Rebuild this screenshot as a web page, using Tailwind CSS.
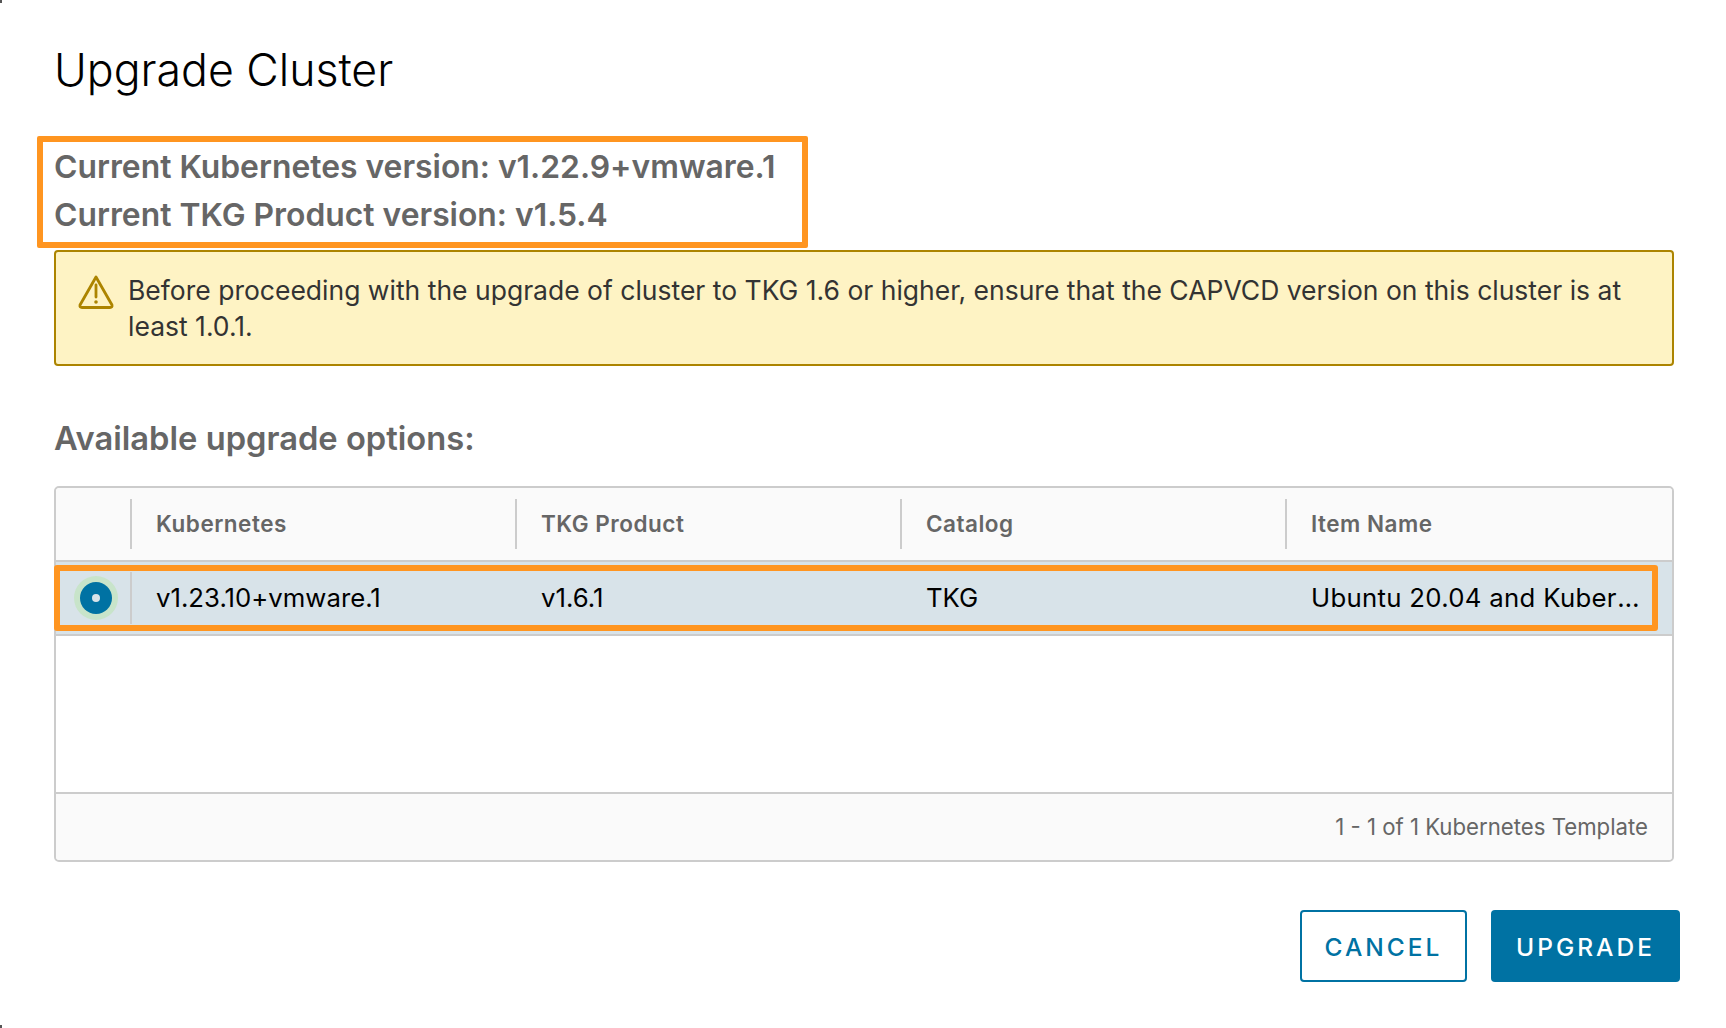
<!DOCTYPE html>
<html lang="en">
<head>
    <meta charset="UTF-8">
    <title>Upgrade Cluster</title>
    <script src="https://cdn.jsdelivr.net/npm/@tailwindcss/browser@4"></script>
</head>
<body class="relative bg-white font-['Inter',sans-serif] w-[1726px] h-[1028px] overflow-hidden">
    <!-- window corner remnants -->
    <span class="absolute top-0 left-0 w-[2px] h-[3px] bg-[#555]"></span>
    <span class="absolute bottom-0 left-0 w-[2px] h-[3px] bg-[#555]"></span>

    <div class="pl-[54px] pr-[52px] pt-[40px]">
        <h1 class="text-[44.6px] leading-[60px] font-light text-black">Upgrade Cluster</h1>

        <!-- current versions, orange annotation box -->
        <div class="mt-[36px] -ml-[17px] w-[771px] h-[112px] border-[6px] border-[#ff9520] rounded-[2px] pl-[11px] pt-[1px] text-[31.85px] leading-[48px] font-semibold text-[#666]">
            <p>Current Kubernetes version: v1.22.9+vmware.1</p>
            <p>Current TKG Product version: v1.5.4</p>
        </div>

        <!-- warning -->
        <div class="mt-[2px] h-[116px] border-2 border-[#ac8400] rounded-[4px] bg-[#fef3c4] flex pl-[22px] pr-[40px] pt-[20px]">
            <svg class="w-[36px] h-[36px] mt-[2px] shrink-0" viewBox="0 0 36 36" fill="none" stroke="#ac8400" stroke-width="2.8" stroke-linejoin="round">
                <path d="M18 3 L34 31 Q34.5 33.5 32 33.5 L4 33.5 Q1.5 33.5 2 31 Z"/>
                <path d="M18 11 V23" stroke-linecap="round"/>
                <circle cx="18" cy="28" r="1.8" fill="#ac8400" stroke="none"/>
            </svg>
            <p class="ml-[14px] text-[26.5px] leading-[36px] text-[#333]">Before proceeding with the upgrade of cluster to TKG 1.6 or higher, ensure that the CAPVCD version on this cluster is at least 1.0.1.</p>
        </div>

        <h2 class="mt-[54px] text-[32.7px] leading-[36px] font-semibold text-[#666]">Available upgrade options:</h2>

        <!-- datagrid -->
        <div class="mt-[30px] h-[376px] border-2 border-[#ccc] rounded-[5px] flex flex-col overflow-visible">
            <div class="h-[74px] shrink-0 bg-[#fafafa] rounded-t-[4px] border-b-2 border-[#ccc] grid grid-cols-[74px_385px_385px_385px_1fr] items-center text-[22.5px] tracking-[0.5px] font-semibold text-[#666]">
                <div class="h-[50px]"></div>
                <div class="h-[50px] border-l-2 border-[#ccc] pl-[24px] flex items-center">Kubernetes</div>
                <div class="h-[50px] border-l-2 border-[#ccc] pl-[24px] flex items-center">TKG Product</div>
                <div class="h-[50px] border-l-2 border-[#ccc] pl-[24px] flex items-center">Catalog</div>
                <div class="h-[50px] border-l-2 border-[#ccc] pl-[24px] flex items-center">Item Name</div>
            </div>
            <div class="relative h-[74px] shrink-0 bg-[#d8e3e9] border-b-2 border-[#ccc] grid grid-cols-[74px_385px_385px_385px_1fr] items-center text-[25.75px] text-black">
                <div class="flex justify-center pl-[6px]">
                    <span class="w-[44px] h-[44px] rounded-full bg-[#c8e4ca] flex items-center justify-center">
                        <span class="w-[32px] h-[32px] rounded-full bg-[#0072a3] flex items-center justify-center">
                            <span class="w-[8px] h-[8px] rounded-full bg-[#d8e3e9]"></span>
                        </span>
                    </span>
                </div>
                <div class="h-[52px] border-l-2 border-[#ccc] pl-[24px] flex items-center">v1.23.10+vmware.1</div>
                <div class="h-[52px] pl-[26px] flex items-center">v1.6.1</div>
                <div class="h-[52px] pl-[26px] flex items-center">TKG</div>
                <div class="pl-[26px] pr-[30px] truncate tracking-[0.3px]">Ubuntu 20.04 and Kubernetes v1.23.10+vmware.1</div>
                <!-- orange annotation over the selected row -->
                <div class="absolute left-[-2px] top-[3px] right-[14px] h-[66px] border-[6px] border-[#ff9520] rounded-[3px]"></div>
            </div>
            <div class="flex-1"></div>
            <div class="h-[68px] shrink-0 bg-[#fafafa] rounded-b-[4px] border-t-2 border-[#ccc] flex items-center justify-end pr-[24px] text-[22.2px] text-[#666]">1 - 1 of 1 Kubernetes Template</div>
        </div>

        <div class="mt-[48px] -mr-[6px] flex justify-end gap-[24px] text-[24.5px] font-medium tracking-[3px]">
            <button class="w-[167px] h-[72px] pt-[3px] border-2 border-[#0072a3] rounded-[4px] text-[#0072a3]">CANCEL</button>
            <button class="w-[189px] h-[72px] pt-[3px] bg-[#0072a3] rounded-[4px] text-white">UPGRADE</button>
        </div>
    </div>
</body>
</html>
